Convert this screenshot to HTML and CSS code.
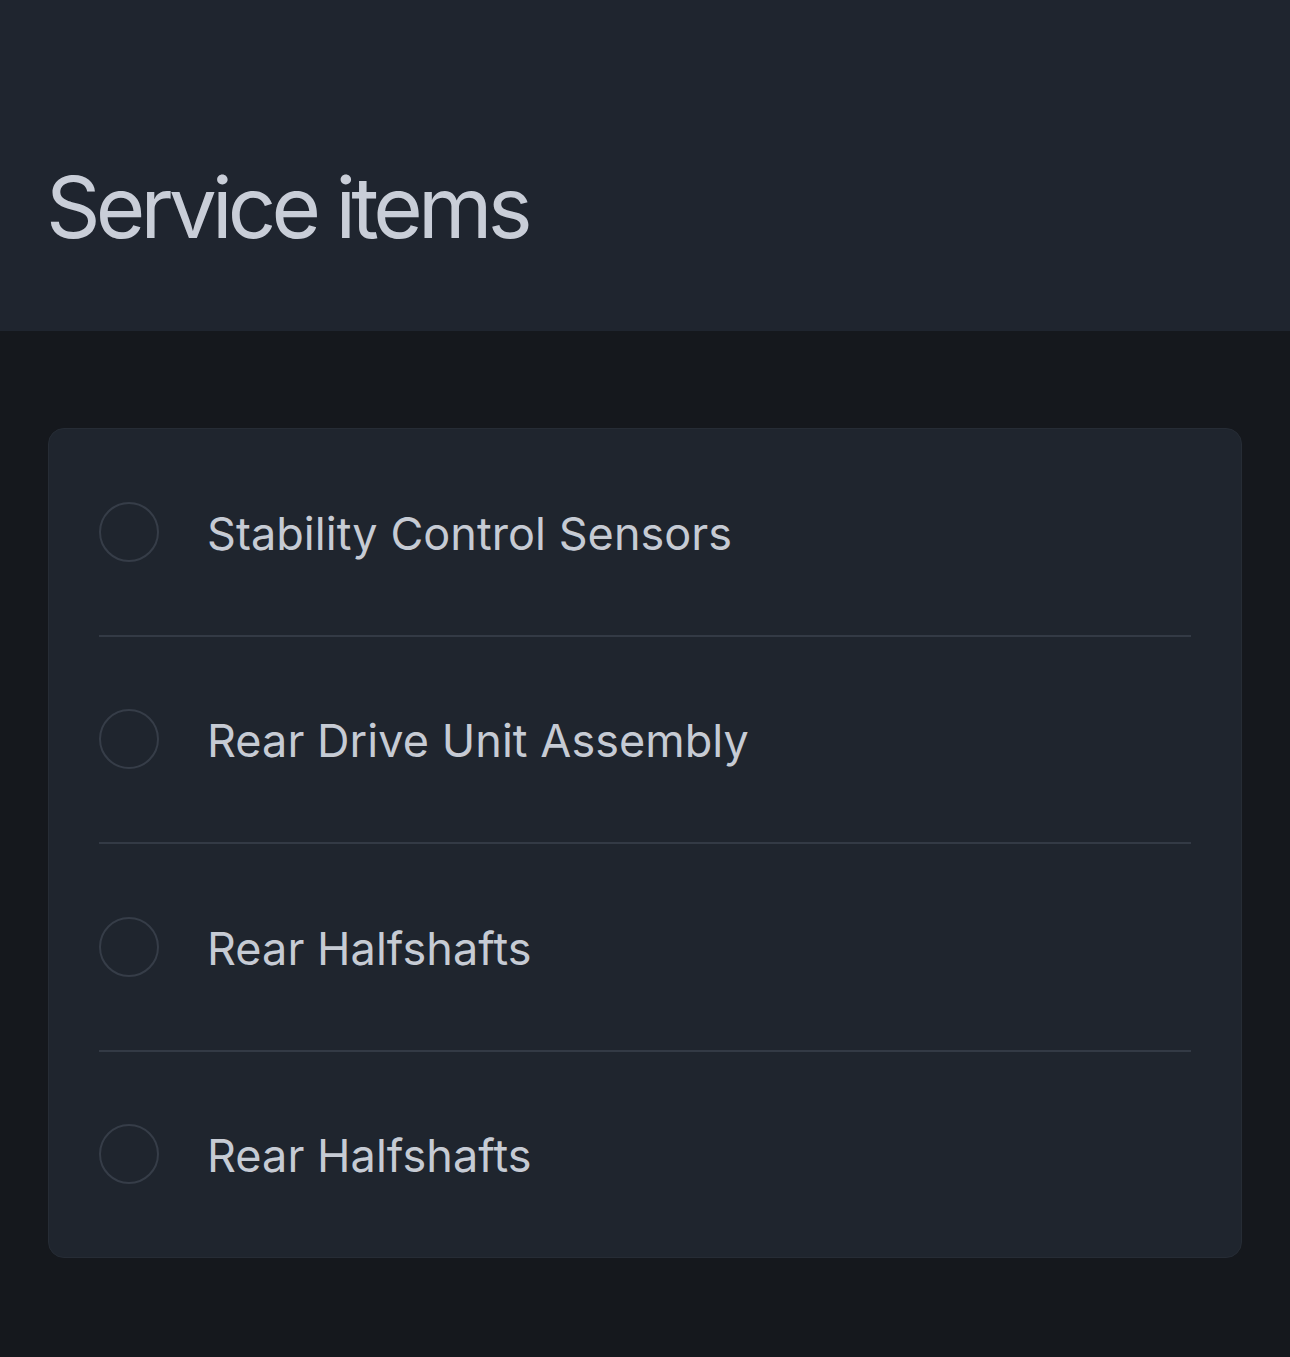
FILE: index.html
```html
<!DOCTYPE html>
<html lang="en">
<head>
    <meta charset="UTF-8">
    <meta name="viewport" content="width=device-width, initial-scale=1.0">
    <title>Service items</title>
    <link rel="stylesheet" href="styles.css">
</head>
<body>
    <header class="page-header">
        <h1>Service items</h1>
    </header>

    <main class="page-main">
        <ul class="service-list">
            <li class="service-item">
                <span class="check"></span>
                <span class="label">Stability Control Sensors</span>
            </li>
            <li class="service-item">
                <span class="check"></span>
                <span class="label">Rear Drive Unit Assembly</span>
            </li>
            <li class="service-item">
                <span class="check"></span>
                <span class="label">Rear Halfshafts</span>
            </li>
            <li class="service-item">
                <span class="check"></span>
                <span class="label">Rear Halfshafts</span>
            </li>
        </ul>
    </main>
</body>
</html>
```

FILE: styles.css
```css
html, body {
    margin: 0;
    padding: 0;
}
body {
    font-family: Inter, "Noto Sans", sans-serif;
    background-color: #15181d;
    color: #c6cbd4;
    min-height: 1357px;
}
.page-header {
    background-color: #1f252f;
    height: 331px;
    padding: 0 46px;
    box-sizing: border-box;
}
.page-header h1 {
    margin: 0;
    padding-top: 158px;
    font-size: 85px;
    font-weight: 400;
    line-height: 100px;
    letter-spacing: -4.8px;
    color: #c9ced8;
}
.page-main {
    padding: 97px 48px 99px;
}
.service-list {
    list-style: none;
    margin: 0;
    padding: 0 50px;
    background-color: #1f252e;
    border: 1px solid #262c35;
    border-radius: 16px;
}
.service-item {
    display: flex;
    align-items: center;
    gap: 48px;
    height: 205.5px;
    border-bottom: 2px solid #333a45;
}
.service-item:last-child {
    border-bottom: none;
}
.check {
    flex: none;
    width: 56px;
    height: 56px;
    border: 2px solid #363d48;
    border-radius: 50%;
}
.label {
    font-size: 45px;
    letter-spacing: 0.05px;
    padding-top: 3px;
}
```
